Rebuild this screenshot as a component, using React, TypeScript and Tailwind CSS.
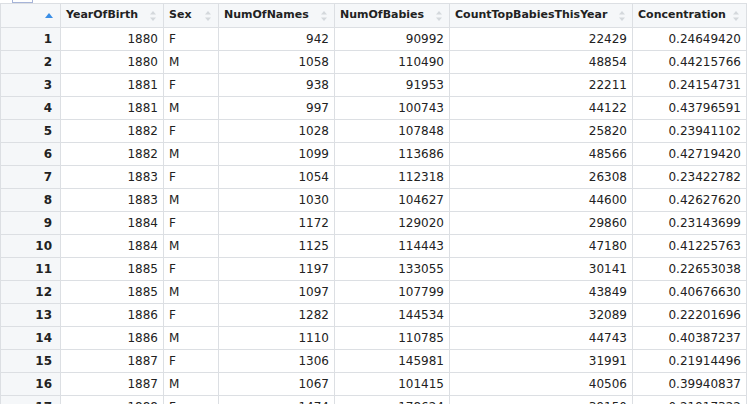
const rows = [
  [1880,"F",942,90992,22429,"0.24649420"],
  [1880,"M",1058,110490,48854,"0.44215766"],
  [1881,"F",938,91953,22211,"0.24154731"],
  [1881,"M",997,100743,44122,"0.43796591"],
  [1882,"F",1028,107848,25820,"0.23941102"],
  [1882,"M",1099,113686,48566,"0.42719420"],
  [1883,"F",1054,112318,26308,"0.23422782"],
  [1883,"M",1030,104627,44600,"0.42627620"],
  [1884,"F",1172,129020,29860,"0.23143699"],
  [1884,"M",1125,114443,47180,"0.41225763"],
  [1885,"F",1197,133055,30141,"0.22653038"],
  [1885,"M",1097,107799,43849,"0.40676630"],
  [1886,"F",1282,144534,32089,"0.22201696"],
  [1886,"M",1110,110785,44743,"0.40387237"],
  [1887,"F",1306,145981,31991,"0.21914496"],
  [1887,"M",1067,101415,40506,"0.39940837"],
  [1888,"F",1474,178624,39150,"0.21917322"],
];
const widths = [60,103,55,116,115,183,114];
const heads = ["","YearOfBirth","Sex","NumOfNames","NumOfBabies","CountTopBabiesThisYear","Concentration"];

function Sort() {
  return <svg width="6" height="10" viewBox="0 0 6 10" className="shrink-0"><path d="M0 3.5 L3 0 L6 3.5Z" fill="#d4d8dc"/><path d="M0 6.5 L3 10 L6 6.5Z" fill="#d4d8dc"/></svg>;
}

export default function App() {
  return (
    <div className="w-[756px] h-[404px] overflow-hidden bg-white text-[12px] text-[#222]" style={{fontFamily:'"DejaVu Sans", sans-serif'}}>
      <div className="h-[3px] bg-white relative">
        <div className="absolute left-[12px] -top-[3px] w-[21px] h-[6px] border border-[#a6b4d8] bg-white" />
      </div>
      <table className="border-collapse table-fixed" style={{width: 746}}>
        <colgroup>{widths.map((w,i)=><col key={i} style={{width:w}}/>)}</colgroup>
        <thead>
          <tr className="h-[24px] bg-[#f5f7f9]">
            {heads.map((h,i)=>(
              <th key={i} className="border border-[#dcdfe3] pl-[5px] pr-[7px] font-bold text-left text-[11px]">
                {i===0 ? (
                  <div className="flex justify-end"><svg width="8" height="5" viewBox="0 0 8 5"><path d="M0 5 L4 0 L8 5Z" fill="#3a8ee6"/></svg></div>
                ) : (
                  <div className="flex items-center justify-between"><span>{h}</span><Sort/></div>
                )}
              </th>
            ))}
          </tr>
        </thead>
        <tbody>
          {rows.map((r,i)=>(
            <tr key={i} className="h-[23px]">
              <td className="border border-[#dcdfe3] bg-[#f5f7f9] text-right font-bold px-[8px]">{i+1}</td>
              {r.map((c,j)=>(
                <td key={j} className={`border border-[#dcdfe3] px-[5px] ${j===1?"text-left":"text-right"}`}>{c}</td>
              ))}
            </tr>
          ))}
        </tbody>
      </table>
    </div>
  );
}
